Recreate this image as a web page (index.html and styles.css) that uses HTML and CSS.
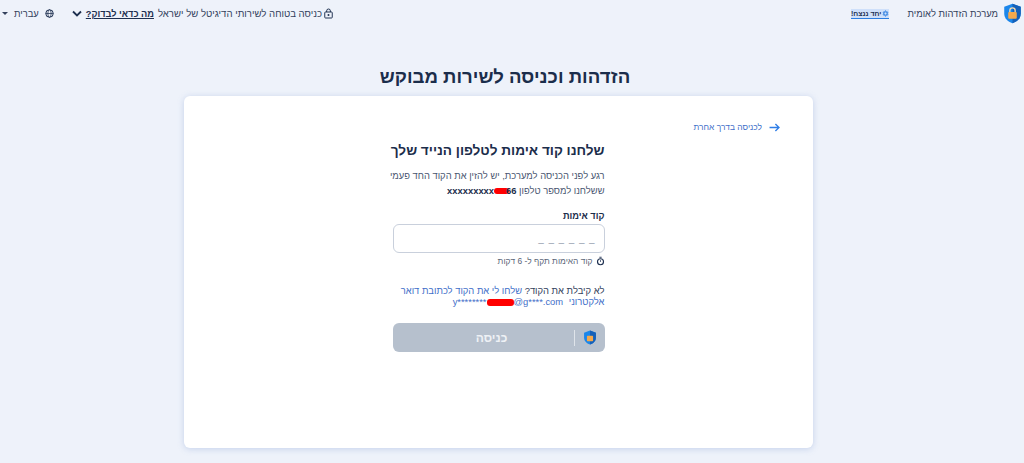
FILE: index.html
```html
<!DOCTYPE html>
<html lang="he" dir="rtl">
<head>
<meta charset="utf-8">
<title>מערכת הזדהות לאומית</title>
<link rel="stylesheet" href="styles.css">
</head>
<body>
<header class="topbar">
  <div class="brand">
    <svg class="shield" viewBox="0 0 20 22" width="19" height="21"><path d="M10 .800l8.700 3.200v7c0 5-3.500 8.700-8.700 10.200C4.800 19.700 1.300 16 1.300 11V4z" fill="#1b86ea"/><path d="M10 .800l8.700 3.200v7c0 5-3.500 8.700-8.700 10.200z" fill="#1560b8"/><path d="M7.200 10V7.800a2.800 2.800 0 015.600 0V10" fill="none" stroke="#f7dcae" stroke-width="1.400"/><rect x="5.500" y="9.500" width="9" height="7" rx="1" fill="#f5a94c"/></svg>
    <span class="brand-name">מערכת הזדהות לאומית</span>
    <a class="yad"><svg viewBox="0 0 10 10" width="7" height="7"><path d="M5 .800l3.600 6.300H1.400zM5 9.200L1.400 2.900h7.200z" fill="none" stroke="#2b7de0" stroke-width="1"/></svg>יחד ננצח!</a>
  </div>
  <div class="tools">
    <svg class="lock" viewBox="0 0 12 14" width="9" height="11"><path d="M3.500 5V3.500a2.500 2.500 0 015 0V5" fill="none" stroke="#1d2f4f" stroke-width="1.300"/><rect x="1" y="5" width="10" height="8" rx="1" fill="none" stroke="#1d2f4f" stroke-width="1.300"/><circle cx="6" cy="9" r="1.300" fill="#1d2f4f"/></svg>
    <span class="secure">כניסה בטוחה לשירותי הדיגיטל של ישראל</span>
    <a class="why">מה כדאי לבדוק?</a>
    <svg class="chev" viewBox="0 0 10 7" width="10" height="7"><path d="M1 1.500l4 4 4-4" fill="none" stroke="#1d2f4f" stroke-width="1.800"/></svg>
    <svg class="globe" viewBox="0 0 12 12" width="9" height="9"><circle cx="6" cy="6" r="5" fill="none" stroke="#1d2f4f" stroke-width="1.300"/><ellipse cx="6" cy="6" rx="2.200" ry="5" fill="none" stroke="#1d2f4f"/><path d="M1 6h10" stroke="#1d2f4f"/></svg>
    <span class="lang">עברית</span>
    <span class="caret"></span>
  </div>
</header>
<main class="page">
  <h1 class="title">הזדהות וכניסה לשירות מבוקש</h1>
  <section class="card">
    <a class="back"><svg viewBox="0 0 12 10" width="11" height="9"><path d="M0.500 5h10M7 1l4 4-4 4" fill="none" stroke="#2f7ee6" stroke-width="1.500"/></svg><span>לכניסה בדרך אחרת</span></a>
    <div class="form">
      <h2 class="heading">שלחנו קוד אימות לטלפון הנייד שלך</h2>
      <p class="intro">רגע לפני הכניסה למערכת, יש להזין את הקוד החד פעמי<br>ששלחנו למספר טלפון <b class="phone">xxxxxxxxx<i class="scribble"></i>66</b></p>
      <label class="label">קוד אימות</label>
      <div class="input"><span class="dashes">– – – – – –</span></div>
      <div class="hint"><svg viewBox="0 0 12 12" width="9" height="10"><circle cx="6" cy="7" r="4" fill="none" stroke="#1d2f4f" stroke-width="1.500"/><path d="M4.500 1h3M6 7V5" stroke="#1d2f4f" stroke-width="1.200"/></svg><span>קוד האימות תקף ל- 6 דקות</span></div>
      <p class="resend">לא קיבלת את הקוד? <a class="link">שלחו לי את הקוד לכתובת דואר<br>אלקטרוני <span class="email" dir="ltr">y********<i class="scribble wide"></i>@g****.com</span></a></p>
      <button class="submit" type="button">
        <span class="btn-icon"><svg viewBox="0 0 20 22" width="14" height="15"><path d="M10 .800l8.700 3.200v7c0 5-3.500 8.700-8.700 10.200C4.800 19.700 1.300 16 1.300 11V4z" fill="#1b86ea"/><path d="M10 .800l8.700 3.200v7c0 5-3.500 8.700-8.700 10.200z" fill="#1560b8"/><rect x="5.500" y="8.500" width="9" height="8" rx="1" fill="#f5a94c"/></svg></span>
        <span class="btn-text">כניסה</span>
      </button>
    </div>
  </section>
</main>
</body>
</html>
```
FILE: styles.css
```css
* { box-sizing: border-box; }
html, body { margin: 0; height: 100%; }
body {
  background: #eef2fa;
  color: #1d2f4f;
  font-family: "Liberation Sans", "Noto Sans", sans-serif;
  overflow: hidden;
}
.topbar {
  height: 27px;
  display: flex;
  justify-content: space-between;
  align-items: center;
  padding: 0 2px;
  font-size: 9.400px;
}
.brand, .tools { display: flex; align-items: center; }
.shield { margin-left: 5px; }
.brand-name { color: #33415c; }
.yad {
  margin-right: 18px;
  font-size: 7px;
  font-weight: 700;
  display: flex;
  align-items: center;
  gap: 1px;
  background: #cfe0fa;
  border-bottom: 1px solid #2b7de0;
  line-height: 9px;
}
.lock { margin-left: 2px; }
.secure { color: #33415c; font-size: 9.600px; }
.why { font-weight: 700; text-decoration: underline; margin-right: 4px; font-size: 9.200px; }
.chev { margin-right: 4px; }
.globe { margin-right: 18px; margin-left: 6px; }
.lang { color: #33415c; }
.caret {
  margin-right: 6px;
  border-top: 3px solid #33415c;
  border-left: 3px solid transparent;
  border-right: 3px solid transparent;
}
.page { display: flex; flex-direction: column; align-items: center; padding-right: 14px; }
.title {
  margin: 38px 0 0;
  font-size: 18.600px;
  line-height: 24px;
  height: 31px;
  font-weight: 700;
  color: #1b2d4b;
}
.card {
  width: 629px;
  height: 352px;
  margin-right: 13px;
  background: #fff;
  border-radius: 6px;
  box-shadow: 0 1px 6px rgba(120, 150, 210, .35);
  padding: 25px 33px 0;
}
.back {
  display: flex;
  align-items: center;
  gap: 7px;
  font-size: 8.400px;
  color: #3f6fc9;
  height: 12px;
}
.form { width: 212px; margin: 8px auto 0; }
.heading { margin: 0; font-size: 13.600px; line-height: 20px; font-weight: 700; color: #1b2d4b; white-space: nowrap; }
.intro { margin: 7px 0 0; font-size: 9.400px; line-height: 15px; color: #4a5670; white-space: nowrap; }
.phone { font-weight: 700; color: #1b2d4b; }
.scribble {
  display: inline-block;
  width: 15px;
  height: 6px;
  background: #f00;
  border-radius: 3px;
  vertical-align: 0;
  margin-right: -3px;
}
.scribble.wide { width: 27px; height: 7px; vertical-align: -1px; margin-left: 0; margin-right: 0; }
.label { display: block; margin-top: 11px; font-size: 9.200px; line-height: 14px; font-weight: 700; color: #1b2d4b; }
.input {
  margin-top: 1px;
  height: 29px;
  background: #fff;
  border: 1px solid #c9d0dc;
  border-radius: 6px;
  padding: 9px 8px 0;
  font-size: 10px;
  color: #9aa3b2;
  line-height: 18px;
}
.dashes { letter-spacing: .9px; }
.hint { display: flex; align-items: center; gap: 3px; margin-top: 1px; height: 14px; font-size: 8.400px; color: #5b6578; }
.resend { margin: 17px 0 0; font-size: 9.400px; line-height: 11px; color: #33415c; white-space: nowrap; }
.link { color: #3f6fc9; }
.email { unicode-bidi: isolate; margin-right: 3px; }
.submit {
  display: flex;
  align-items: center;
  width: 100%;
  height: 29px;
  margin-top: 16px;
  padding: 0;
  border: 0;
  border-radius: 6px;
  background: #b6c0cd;
  font-family: inherit;
}
.btn-icon {
  display: flex;
  justify-content: center;
  align-items: center;
  width: 31px;
  height: 16px;
  border-left: 1px solid #dfe4ea;
}
.btn-text { flex: 1; padding-left: 17px; font-size: 12px; font-weight: 700; color: #eef1f5; text-align: center; }
```
